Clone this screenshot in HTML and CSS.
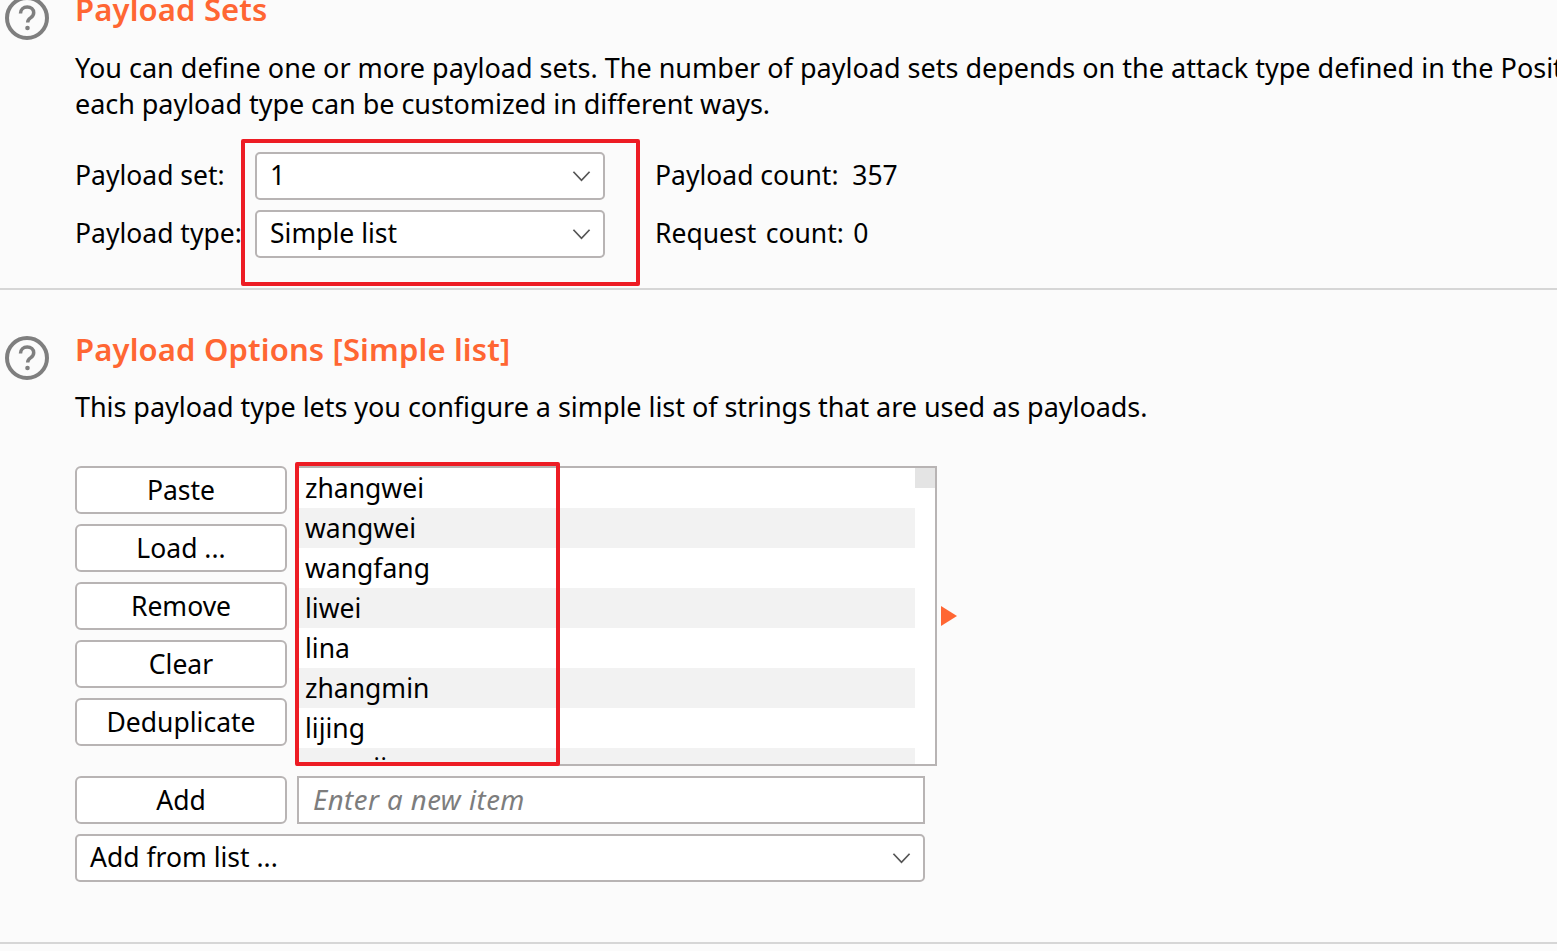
FILE: index.html
```html
<!DOCTYPE html>
<html lang="en">
<head>
<meta charset="UTF-8">
<title>Payload Sets</title>
<link rel="stylesheet" href="styles.css">
</head>
<body>

<section class="panel panel-sets">
    <svg class="help" viewBox="0 0 44 44"><circle cx="22" cy="22" r="20" fill="none" stroke="#7f7f7f" stroke-width="4"/><path d="M15.500 17.500c0-4 3-6.500 6.700-6.500 3.800 0 6.500 2.400 6.500 5.700 0 2.600-1.400 3.900-3.200 5.200-1.900 1.300-2.800 2.300-2.800 4.600" fill="none" stroke="#7f7f7f" stroke-width="3.500"/><circle cx="22.500" cy="32" r="2.300" fill="#7f7f7f"/></svg>
    <div class="panel-body">
        <h2>Payload Sets</h2>
        <p class="desc">You can define one or more payload sets. The number of payload sets depends on the attack type defined in the Positions tab. Various payload types are available for each payload set, and<br><span class="tight">each payload type can be customized in different ways.</span></p>
        <div class="set-grid">
            <label>Payload set:</label>
            <div class="select select-small"><span>1</span><svg class="chev" viewBox="0 0 20 12"><path d="M1.500 1.500 10 10.500 18.500 1.500"/></svg></div>
            <label>Payload count:&nbsp; 357</label>
            <label>Payload type:</label>
            <div class="select select-small"><span>Simple list</span><svg class="chev" viewBox="0 0 20 12"><path d="M1.500 1.500 10 10.500 18.500 1.500"/></svg></div>
            <label class="request-count">Request count: 0</label>
        </div>
    </div>
</section>

<section class="panel panel-options">
    <svg class="help" viewBox="0 0 44 44"><circle cx="22" cy="22" r="20" fill="none" stroke="#7f7f7f" stroke-width="4"/><path d="M15.500 17.500c0-4 3-6.500 6.700-6.500 3.800 0 6.500 2.400 6.500 5.700 0 2.600-1.400 3.900-3.200 5.200-1.900 1.300-2.800 2.300-2.800 4.600" fill="none" stroke="#7f7f7f" stroke-width="3.500"/><circle cx="22.500" cy="32" r="2.300" fill="#7f7f7f"/></svg>
    <div class="panel-body">
        <h2>Payload Options [Simple list]</h2>
        <p class="desc"><span class="tight">This payload type lets you configure a simple list of strings that are used as payloads.</span></p>

        <div class="list-row">
            <div class="btn-col">
                <button>Paste</button>
                <button>Load ...</button>
                <button>Remove</button>
                <button>Clear</button>
                <button>Deduplicate</button>
            </div>
            <div class="list-box">
                <ul class="items">
                    <li>zhangwei</li>
                    <li>wangwei</li>
                    <li>wangfang</li>
                    <li>liwei</li>
                    <li>lina</li>
                    <li>zhangmin</li>
                    <li>lijing</li>
                    <li>wangjing</li>
                </ul>
                <div class="scroll-thumb"></div>
            </div>
            <div class="arrow"></div>
        </div>

        <div class="add-row">
            <button>Add</button>
            <div class="new-item">Enter a new item</div>
        </div>
        <div class="select select-wide"><span>Add from list ...</span><svg class="chev" viewBox="0 0 20 12"><path d="M1.500 1.500 10 10.500 18.500 1.500"/></svg></div>
    </div>
</section>

<div class="mark mark-select"></div>
<div class="mark mark-list"></div>

</body>
</html>
```

FILE: styles.css
```css
:root {
    --orange: #ff6633;
    --line: #b8b4b4;
}
html, body {
    margin: 0;
    padding: 0;
    height: 951px;
    overflow: hidden;
}
body {
    background: #fbfbfb;
    font-family: "Noto Sans", Arial, sans-serif;
    font-size: 26.5px;
    color: #000;
    position: relative;
}
.panel {
    display: flex;
    box-sizing: border-box;
    padding-left: 5px;
    border-bottom: 2px solid #d6d6d6;
}
.panel-sets {
    height: 298px;
    margin-top: -8px;
}
.panel-options {
    height: 654px;
    padding-top: 42px;
}
.help {
    width: 44px;
    height: 44px;
    flex: none;
    margin-top: 4px;
    margin-right: 26px;
}
h2 {
    margin: 0;
    font-size: 31px;
    line-height: 34px;
    font-weight: 600;
    letter-spacing: 0.15px;
    color: var(--orange);
}
.desc {
    margin: 23px 0 0;
    font-size: 27px;
    line-height: 36px;
    white-space: nowrap;
}
.panel-sets .desc {
    margin-top: 24px;
}
.tight {
    letter-spacing: -0.05px;
}
.set-grid {
    display: grid;
    grid-template-columns: 180px 350px auto;
    grid-auto-rows: 48px;
    row-gap: 10px;
    margin-top: 30px;
    align-items: center;
}
.set-grid label {
    padding-bottom: 2px;
}
.set-grid label:nth-child(3n) {
    padding-left: 50px;
}
.request-count {
    word-spacing: 2.5px;
}
.select {
    display: flex;
    align-items: center;
    justify-content: space-between;
    box-sizing: border-box;
    height: 48px;
    padding: 0 12px 0 13px;
    background: #fff;
    border: 2px solid var(--line);
    border-radius: 5px;
}
.select span {
    padding-bottom: 2px;
}
.chev {
    width: 19px;
    height: 12px;
    fill: none;
    stroke: #555;
    stroke-width: 1.800;
}
.list-row {
    display: flex;
    margin-top: 41px;
}
.btn-col {
    display: flex;
    flex-direction: column;
    gap: 10px;
    width: 212px;
}
button {
    box-sizing: border-box;
    width: 212px;
    height: 48px;
    padding: 0 0 1px;
    background: #fff;
    border: 2px solid var(--line);
    border-radius: 6px;
    font: inherit;
    color: #000;
}
.list-box {
    position: relative;
    box-sizing: border-box;
    width: 641px;
    height: 300px;
    margin-left: 9px;
    background: #fff;
    border: 2px solid var(--line);
    overflow: hidden;
}
.items {
    list-style: none;
    margin: 0;
    padding: 0;
    width: 617px;
}
.items li {
    box-sizing: border-box;
    height: 40px;
    line-height: 40px;
    padding-left: 7px;
}
.items li:nth-child(even) {
    background: #f2f2f2;
}
.scroll-thumb {
    position: absolute;
    top: 0;
    right: 0;
    width: 20px;
    height: 20px;
    background: #e4e4e4;
}
.arrow {
    width: 0;
    height: 0;
    margin: 140px 0 0 4px;
    border-left: 16px solid var(--orange);
    border-top: 10px solid transparent;
    border-bottom: 10px solid transparent;
}
.add-row {
    display: flex;
    gap: 10px;
    margin-top: 10px;
}
.new-item {
    box-sizing: border-box;
    width: 628px;
    height: 48px;
    padding-left: 14px;
    font-size: 27.5px;
    line-height: 44px;
    letter-spacing: 0.5px;
    background: #fff;
    border: 2px solid var(--line);
    font-style: italic;
    color: #7d7d7d;
}
.select-wide {
    width: 850px;
    margin-top: 10px;
}
.mark {
    position: absolute;
    box-sizing: border-box;
    border: 4px solid #ed1c24;
    border-radius: 2px;
}
.mark-select {
    left: 241px;
    top: 139px;
    width: 399px;
    height: 147px;
}
.mark-list {
    left: 295px;
    top: 462px;
    width: 265px;
    height: 304px;
}
```
